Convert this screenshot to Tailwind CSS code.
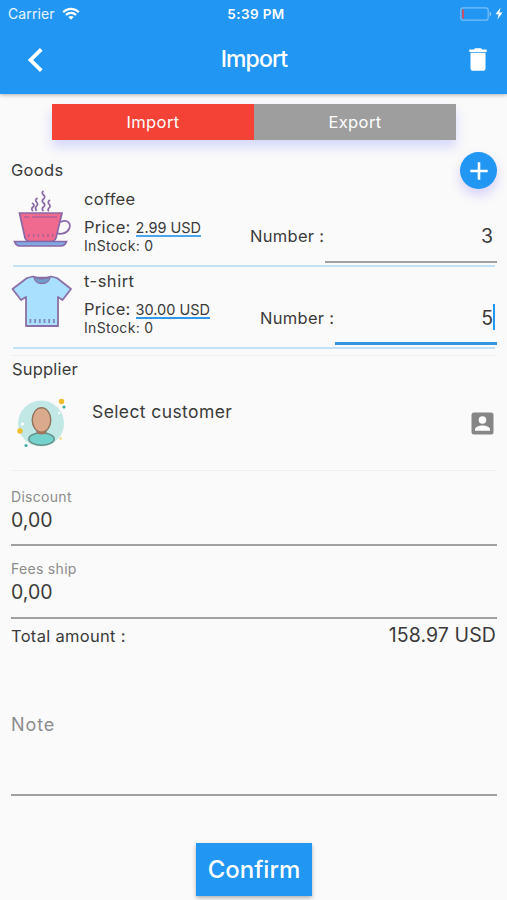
<!DOCTYPE html>
<html lang="en">
<head>
    <meta charset="UTF-8" />
    <meta name="viewport" content="width=device-width, initial-scale=1.0"/>
    <title>Import</title>
    <script src="https://cdn.jsdelivr.net/npm/@tailwindcss/browser@4"></script>
</head>
<body class="bg-[#fafafa] font-['Inter','Liberation_Sans',sans-serif] text-[#3a3a3a] h-[900px] overflow-hidden whitespace-nowrap">

    <!-- Header -->
    <header class="h-[94px] bg-[#2196f3] text-white shadow-[0_1px_4px_rgba(0,0,0,0.3)]">
        <!-- Status bar -->
        <div class="h-[27px] grid grid-cols-3 items-center pl-[8px] pr-[5px]">
            <div class="flex items-center gap-[7px]">
                <span class="text-[14px] tracking-[0.1px] text-white/90">Carrier</span>
                <svg class="w-[18px] h-[13px]" viewBox="0 0 18 13" fill="none" stroke="white" stroke-width="2.2">
                    <path d="M1.2 5.2C5.6 0.8 12.4 0.8 16.8 5.2" />
                    <path d="M4 8C6.9 5.2 11.1 5.2 14 8" />
                    <path d="M6.3 10C7.8 8.7 10.2 8.7 11.7 10L9 12.7Z" fill="white" stroke="none" />
                </svg>
            </div>
            <span class="text-center text-[13.5px] font-semibold tracking-[0.4px] pt-[1px] ml-[2px]">5:39 PM</span>
            <div class="flex items-center justify-end gap-[3px] -mr-[1px]">
                <svg class="w-[32px] h-[14px]" viewBox="0 0 32 14">
                    <rect x="0.8" y="0.8" width="27.4" height="12.4" rx="2.5" fill="none" stroke="white" stroke-opacity="0.4" stroke-width="1.2" />
                    <rect x="2" y="2.5" width="2" height="9" fill="#c8506f" />
                    <path d="M29.7 4.8C31.8 5.5 31.8 8.5 29.7 9.2Z" fill="white" fill-opacity="0.5" />
                </svg>
                <svg class="w-[8px] h-[13px]" viewBox="0 0 8 13" fill="white">
                    <path d="M5.6 0.5L0.5 7.2H3.6L2.4 12.5L7.6 5.6H4.4Z" />
                </svg>
            </div>
        </div>
        <!-- Title bar -->
        <div class="h-[65px] grid grid-cols-3 items-center pl-[27px] pr-[20px]">
            <svg class="w-[17px] h-[26px]" viewBox="0 0 17 26" fill="none" stroke="white" stroke-width="3.8">
                <path d="M14.3 2.3L3.5 13L14.3 23.7" />
            </svg>
            <h1 class="text-center text-[23px] font-medium tracking-[-0.9px] mr-[6px]">Import</h1>
            <svg class="w-[18px] h-[23px] justify-self-end" viewBox="0 0 18 23" fill="white">
                <path d="M0.3 1.5H4.8L6 0.3H12L13.2 1.5H17.7V4H0.3Z" />
                <path d="M1.5 4.8H16.5V20.2C16.5 21.8 15.5 22.8 14 22.8H4C2.5 22.8 1.5 21.8 1.5 20.2Z" />
            </svg>
        </div>
    </header>

    <main class="pl-[11px] pr-[10px] pt-[10px]">
        <!-- Import / Export -->
        <div class="h-[36px] ml-[41px] w-[404px] grid grid-cols-2 text-center text-[16.5px] leading-[36px] tracking-[0.4px] text-white shadow-[0_7px_12px_rgba(80,90,255,0.22)]">
            <button class="bg-[#f44336]">Import</button>
            <button class="bg-[#9e9e9e]">Export</button>
        </div>

        <!-- Goods -->
        <div class="mt-[12px] h-[37px] flex items-center justify-between">
            <h2 class="text-[16.5px] tracking-[0.3px]">Goods</h2>
            <button class="w-[37px] h-[37px] rounded-full bg-[#2196f3] flex items-center justify-center shadow-[0_6px_12px_rgba(80,60,255,0.22)]">
                <svg class="w-[18px] h-[18px]" viewBox="0 0 18 18" stroke="white" stroke-width="2.6">
                    <path d="M9 0.3V17.7M0.3 9H17.7" />
                </svg>
            </button>
        </div>

        <div class="h-[78px] mr-[2px] ml-[2px] border-b-2 border-[#c2e1f7] flex">
            <svg class="mt-[1px] w-[58px] h-[60px] shrink-0" viewBox="0 0 58 60" fill="none" stroke="#8a67a6" stroke-width="1.7">
                <path d="M19 13q3.500 2 1 4t0 4M24.500 8q-3 2-1 4t0 4t0 5M30.500 1q-2.500 2 0 4t0 4t0 4t0 4t0 4M37 10q-3 2-1 4t0 4t0 3" />
                <path d="M47.500 32C55 28.500 58.500 34 56 39C53.500 44 47 44.500 44 43" />
                <path d="M6.500 23H49L43 48Q41.500 51.500 38 51.500H17Q13.500 51.500 12 48Z" fill="#f06a8f" />
                <path d="M11 27H16M19 27H44" stroke="#b0609a" stroke-width="1.4" />
                <path d="M15 45.500H41" stroke="#b0609a" stroke-width="3" stroke-dasharray="1.500 3.300" />
                <path d="M1.500 51.500H53.500Q52 56 48 56H7Q3 56 1.500 51.500Z" fill="#7fa9e2" />
            </svg>
            <div class="ml-[13px] w-[166px]">
                <p class="text-[16.5px] leading-[20px] tracking-[0.3px]">coffee</p>
                <p class="mt-[8px] text-[16.5px] leading-[20px] tracking-[0.3px]">Price: <span class="inline-block text-[14.5px] leading-[15px] tracking-[0px] border-b-2 border-[#4ba6ee]">2.99 USD</span></p>
                <p class="text-[14px] leading-[18px] tracking-[0.3px]">InStock: 0</p>
            </div>
            <p class="mt-[37px] text-[16.5px] leading-[20px] tracking-[0.3px]">Number :</p>
            <div class="ml-auto -mr-[2px] w-[172px] h-[74px] border-b-2 border-[#a0a0a0] pt-[35px] pr-[4px] text-right text-[19.5px] leading-[24px]">3</div>
        </div>

        <div class="h-[82px] mr-[2px] border-b-2 border-[#c2e1f7] flex ml-[2px]">
            <svg class="-ml-[2px] mt-[8px] w-[62px] h-[54px] shrink-0" viewBox="0 0 62 54" fill="#a9e0fd" stroke="#8a70a6" stroke-width="1.8" stroke-linejoin="round">
                <path d="M16 3L22 1.500Q31 4 40 1.500L46 3L60 14L51.500 25L47 22V51H15V22L10 25L1.500 14Z" />
                <path d="M23 2.500Q24 8.500 31 8.500T39 2.500Q31 5 23 2.500Z" fill="#719dcc" stroke-width="1.3" />
                <path d="M18.500 46H44" stroke="#7f86c0" stroke-width="4" stroke-dasharray="1.800 2.900" />
            </svg>
            <div class="mt-[4px] ml-[11px] w-[176px]">
                <p class="text-[16.5px] leading-[20px] tracking-[0.5px]">t-shirt</p>
                <p class="mt-[8px] text-[16.5px] leading-[20px] tracking-[0.3px]">Price: <span class="inline-block text-[14.5px] leading-[15px] tracking-[0px] border-b-2 border-[#2f98ee]">30.00 USD</span></p>
                <p class="text-[14px] leading-[18px] tracking-[0.3px]">InStock: 0</p>
            </div>
            <p class="mt-[41px] text-[16.5px] leading-[20px] tracking-[0.3px]">Number :</p>
            <div class="ml-auto -mr-[2px] w-[162px] h-[78px] border-b-3 border-[#3594df] pt-[37px] pr-[2px] flex justify-end text-[19.5px] leading-[28px]">5<span class="w-[2px] h-[26px] bg-[#2196f3]"></span></div>
        </div>

        <!-- Supplier -->
        <div class="mt-[6px] h-[116px] border-y border-[#efefef] flex">
            <div class="w-[81px] pl-[1px]">
                <h2 class="mt-[3px] text-[16.5px] leading-[20px] tracking-[0.2px]">Supplier</h2>
                <svg class="mt-[19px] ml-[4px] w-[52px] h-[50px]" viewBox="0 0 52 50">
                    <circle cx="25" cy="25.500" r="23" fill="#c2e8e5" />
                    <path d="M21 30H30V37H21Z" fill="#b97f65" stroke="#91755f" stroke-width="1" />
                    <ellipse cx="25.500" cy="41" rx="12.700" ry="6.200" fill="#75d1cb" stroke="#68908b" stroke-width="1.500" />
                    <path d="M21.500 33H29.500V35.500Q25.500 37.500 21.500 35.500Z" fill="#a7735d" />
                    <ellipse cx="25.500" cy="22" rx="9.300" ry="12.200" fill="#dba98c" stroke="#91755f" stroke-width="1.400" />
                    <circle cx="45.500" cy="3.500" r="2.700" fill="#f0bd2c" />
                    <circle cx="4" cy="33" r="2.700" fill="#f0bd2c" />
                    <circle cx="44.500" cy="40.500" r="1.200" fill="#f3cf72" />
                    <circle cx="48" cy="9" r="1.600" fill="#3dafa5" />
                    <circle cx="10" cy="47.500" r="1.600" fill="#3dafa5" />
                    <circle cx="6.500" cy="26" r="1.500" fill="white" />
                    <circle cx="43" cy="15" r="1.200" fill="white" />
                </svg>
            </div>
            <p class="mt-[44px] text-[17.5px] leading-[24px] tracking-[0.4px]">Select customer</p>
            <svg class="ml-auto mr-[3px] mt-[56px] w-[23px] h-[23px]" viewBox="0 0 23 23">
                <rect x="0.500" y="0.500" width="22" height="22" rx="2.500" fill="#868686" />
                <circle cx="11.500" cy="8" r="3.800" fill="white" />
                <path d="M4 18.800V17.500C4 14.800 8.500 13.500 11.500 13.500S19 14.800 19 17.500V18.800Z" fill="white" />
            </svg>
        </div>

        <!-- Amounts -->
        <div class="h-[75px] pt-[17px] border-b-2 border-[#a0a0a0]">
            <label class="block text-[14px] leading-[18px] tracking-[0.3px] text-[#8c8c8c]">Discount</label>
            <p class="mt-[1px] text-[19.5px] leading-[26px]">0,00</p>
        </div>
        <div class="h-[73px] pt-[14px] border-b-2 border-[#a0a0a0]">
            <label class="block text-[14px] leading-[18px] tracking-[0.3px] text-[#8c8c8c]">Fees ship</label>
            <p class="mt-[1px] text-[19.5px] leading-[26px]">0,00</p>
        </div>
        <div class="h-[34px] flex items-center justify-between pr-[1px]">
            <p class="text-[16.5px] tracking-[0.3px]">Total amount :</p>
            <p class="text-[19.5px] tracking-[0.1px]">158.97 USD</p>
        </div>

        <!-- Note -->
        <div class="h-[143px] pt-[60px] border-b-2 border-[#a0a0a0] text-[18px] leading-[24px] tracking-[0.9px] text-[#8c8c8c]">Note</div>

        <button class="block mt-[47px] ml-[185px] w-[116px] h-[53px] bg-[#2196f3] text-white text-[24px] font-medium shadow-[0_2px_4px_rgba(0,0,0,0.3)]">Confirm</button>
    </main>

</body>
</html>
